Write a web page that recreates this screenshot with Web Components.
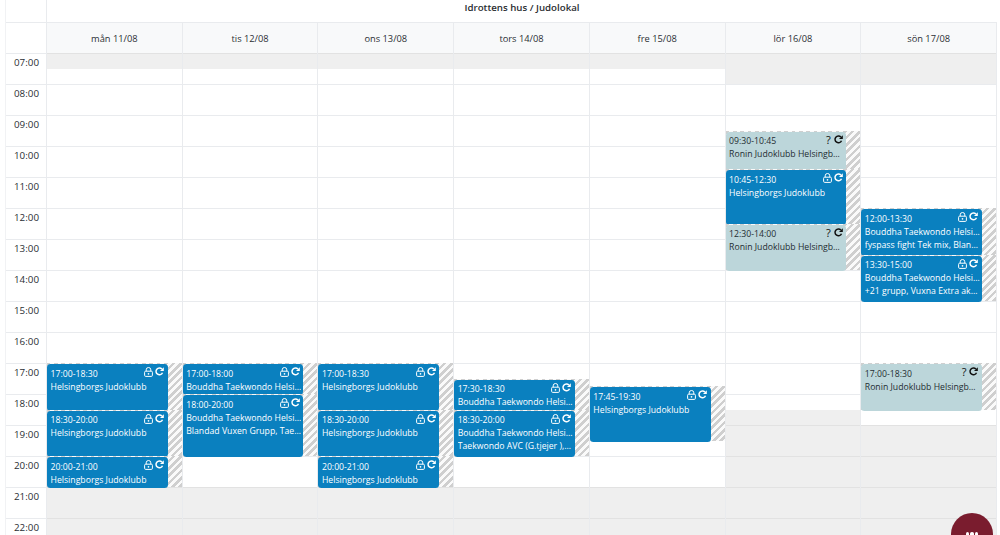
<!DOCTYPE html>
<html lang="sv"><head><meta charset="utf-8"><title>Kalender</title>
<style>
html,body{margin:0;height:535px;overflow:hidden;background:#fff}
body{font-family:"Open Sans","Noto Sans",sans-serif;color:#212529}
</style></head><body>
<week-calendar title-text="Idrottens hus / Judolokal">
  <time-gutter slot="gutter"></time-gutter>
  <day-head slot="head">mån 11/08</day-head><day-head slot="head">tis 12/08</day-head><day-head slot="head">ons 13/08</day-head><day-head slot="head">tors 14/08</day-head><day-head slot="head">fre 15/08</day-head><day-head slot="head">lör 16/08</day-head><day-head slot="head">sön 17/08</day-head>
  <day-column slot="day" closed-morning="1" closed-evening="28">
    <cal-event start="17" end="18.5" kind="booked" l1="Helsingborgs Judoklubb"></cal-event>
    <cal-event start="18.5" end="20" kind="booked" l1="Helsingborgs Judoklubb"></cal-event>
    <cal-event start="20" end="21" kind="booked" l1="Helsingborgs Judoklubb"></cal-event>
  </day-column>
  <day-column slot="day" closed-morning="1" closed-evening="28">
    <cal-event start="17" end="18" kind="booked" l1="Bouddha Taekwondo Helsingborg"></cal-event>
    <cal-event start="18" end="20" kind="booked" l1="Bouddha Taekwondo Helsingborg" l2="Blandad Vuxen Grupp, Taekwondo"></cal-event>
  </day-column>
  <day-column slot="day" closed-morning="1" closed-evening="28">
    <cal-event start="17" end="18.5" kind="booked" l1="Helsingborgs Judoklubb"></cal-event>
    <cal-event start="18.5" end="20" kind="booked" l1="Helsingborgs Judoklubb"></cal-event>
    <cal-event start="20" end="21" kind="booked" l1="Helsingborgs Judoklubb"></cal-event>
  </day-column>
  <day-column slot="day" closed-morning="1" closed-evening="28">
    <cal-event start="17.5" end="18.5" kind="booked" l1="Bouddha Taekwondo Helsingborg"></cal-event>
    <cal-event start="18.5" end="20" kind="booked" l1="Bouddha Taekwondo Helsingborg" l2="Taekwondo AVC (G.tjejer ), Taekwondo"></cal-event>
  </day-column>
  <day-column slot="day" closed-morning="1" closed-evening="28">
    <cal-event start="17.75" end="19.5" kind="booked" l1="Helsingborgs Judoklubb"></cal-event>
  </day-column>
  <day-column slot="day" closed-morning="2" closed-evening="23">
    <cal-event start="9.5" end="10.75" kind="pending" l1="Ronin Judoklubb Helsingborg"></cal-event>
    <cal-event start="10.75" end="12.5" kind="booked" l1="Helsingborgs Judoklubb"></cal-event>
    <cal-event start="12.5" end="14" kind="pending" l1="Ronin Judoklubb Helsingborg"></cal-event>
  </day-column>
  <day-column slot="day" closed-morning="2" closed-evening="24">
    <cal-event start="12" end="13.5" kind="booked" l1="Bouddha Taekwondo Helsingborg" l2="fyspass fight Tek mix, Blandad"></cal-event>
    <cal-event start="13.5" end="15" kind="booked" l1="Bouddha Taekwondo Helsingborg" l2="+21 grupp, Vuxna Extra aktivitet"></cal-event>
    <cal-event start="17" end="18.5" kind="pending" l1="Ronin Judoklubb Helsingborg"></cal-event>
  </day-column>
  <fab-button slot="fab"></fab-button>
</week-calendar>
<script>
const LINE='#e9ebee';
const HOUR_PX=31;
const DAY_START=7;
customElements.define('week-calendar',class extends HTMLElement{
  constructor(){super();const s=this.attachShadow({mode:'open'});
    s.innerHTML=`<style>
      :host{display:block;position:relative;height:535px;overflow:hidden;margin-left:5px;padding-right:3px;border-left:1px solid #f1f2f4;box-sizing:border-box}
      .grid{display:grid;grid-template-columns:41px repeat(7,minmax(0,1fr));grid-template-rows:23px 30px auto}
      .corner{border-right:1px solid ${LINE}}
      .corner.a{border-bottom:1px solid ${LINE}}
      .title{grid-column:2 / -1;display:flex;align-items:center;justify-content:center;font-weight:600;font-size:9.7px;padding-bottom:7px;box-sizing:border-box;color:#2a2d31;border-bottom:1px solid ${LINE}}
      ::slotted(time-gutter){grid-column:1;grid-row:3}
    </style>
    <div class="grid">
      <div class="corner a"></div><div class="title"></div>
      <div class="corner"></div>
      <slot name="head"></slot>
      <slot name="gutter"></slot>
      <slot name="day"></slot>
    </div><slot name="fab"></slot>`;
    s.querySelector('.title').textContent=this.getAttribute('title-text');
  }
});
customElements.define('day-head',class extends HTMLElement{
  constructor(){super();this.attachShadow({mode:'open'}).innerHTML=`<style>
    :host{display:flex;align-items:center;justify-content:center;background:#f8f9fa;border-right:1px solid ${LINE};font-weight:500;font-size:9.3px;color:#2b2f34;min-width:0}
  </style><slot></slot>`;}
});
customElements.define('time-gutter',class extends HTMLElement{
  constructor(){super();const s=this.attachShadow({mode:'open'});
    let h='';for(let i=7;i<=22;i++)h+=`<div>${String(i).padStart(2,'0')}:00</div>`;
    s.innerHTML=`<style>
      :host{display:block;border-right:1px solid ${LINE}}
      div{height:${HOUR_PX}px;box-sizing:border-box;text-align:right;padding:1px 7px 0 0;font-size:9.8px;font-weight:500;line-height:15px;color:#2b2f34;border-top:1px solid ${LINE}}
    </style>${h}`;}
});
customElements.define('day-column',class extends HTMLElement{
  constructor(){super();this.attachShadow({mode:'open'});}
  connectedCallback(){
    const m=+this.getAttribute('closed-morning'),e=+this.getAttribute('closed-evening');
    let h='';for(let i=0;i<32;i++){const c=(i<m||i>=e)?'closed':'';h+=`<div class="slot ${c} ${i%2?'':'hour'}"></div>`;}
    this.shadowRoot.innerHTML=`<style>
      :host{display:block;position:relative;border-right:1px solid ${LINE};min-width:0}
      .slot{height:${HOUR_PX/2}px;box-sizing:border-box}
      .hour{border-top:1px solid ${LINE}}
      .closed{background:#efefef}
      .closed.hour{border-top-color:#e2e2e2}
      .slot:first-child{border-top:0}
    </style>${h}<slot></slot>`;
  }
});
const lock=`<svg width="9" height="10" viewBox="0 0 9 10" fill="none" stroke="currentColor" stroke-width="1"><rect x=".6" y="4.2" width="7.8" height="5.2" rx="1.1"/><path d="M2.2 4.2V2.8a2.3 2.3 0 0 1 4.6 0v1.4"/><circle cx="4.5" cy="6.8" r=".85" fill="currentColor" stroke="none"/></svg>`;
const redo=`<svg width="9" height="9" viewBox="0 0 9 9" fill="none"><path d="M7.5 5.8A3.4 3.4 0 1 1 6.9 2" stroke="currentColor" stroke-width="1.5"/><path d="M8.8.2v3.8H5z" fill="currentColor"/></svg>`;
customElements.define('cal-event',class extends HTMLElement{
  constructor(){super();this.attachShadow({mode:'open'});}
  connectedCallback(){
    const a=+this.getAttribute('start'),b=+this.getAttribute('end'),k=this.getAttribute('kind');
    const fmt=v=>String(Math.floor(v)).padStart(2,'0')+':'+String(Math.round((v%1)*60)).padStart(2,'0');
    this.style.top=((a-DAY_START)*HOUR_PX)+'px';
    this.style.height=((b-a)*HOUR_PX)+'px';
    const l2=this.getAttribute('l2');
    this.shadowRoot.innerHTML=`<style>
      :host{position:absolute;left:0;right:0;display:block;background:repeating-linear-gradient(135deg,#cfcfcf 0 2.6px,#fafafa 2.6px 5.2px)}
      .ev{box-sizing:border-box;width:89.6%;height:100%;margin-top:1px;border-radius:3.5px;padding:3.5px 2px 0 3.5px;color:#fff;background:#0a80bf;font-size:8.7px;line-height:13px;position:relative}
      :host([kind=pending]) .ev{background:#bcd6da;color:#1f2d32}
      .t{display:block}
      .l{display:block;white-space:nowrap;overflow:hidden;text-overflow:ellipsis}
      .i{position:absolute;top:3px;right:3.5px;display:flex;gap:2px;align-items:flex-start}
      .q{font-size:11px;line-height:10px;margin-right:1px}
      :host([kind=pending]) .i{color:#111}
    </style><div class="ev"><span class="t">${fmt(a)}-${fmt(b)}</span><span class="i">${k==='booked'?lock:'<span class="q">?</span>'}${redo}</span><span class="l">${this.getAttribute('l1')}</span>${l2?`<span class="l">${l2}</span>`:''}</div>`;
  }
});
customElements.define('fab-button',class extends HTMLElement{
  constructor(){super();this.attachShadow({mode:'open'}).innerHTML=`<style>
    :host{position:absolute;left:945px;top:513px;width:42px;height:42px;border-radius:50%;background:#7a1c2e;display:flex;justify-content:center;padding-top:19px;box-sizing:border-box;gap:1px}
    i{width:3.5px;height:3.5px;border-radius:50%;background:#fff}
  </style><i></i><i></i><i></i>`;}
});
</script>
</body></html>
